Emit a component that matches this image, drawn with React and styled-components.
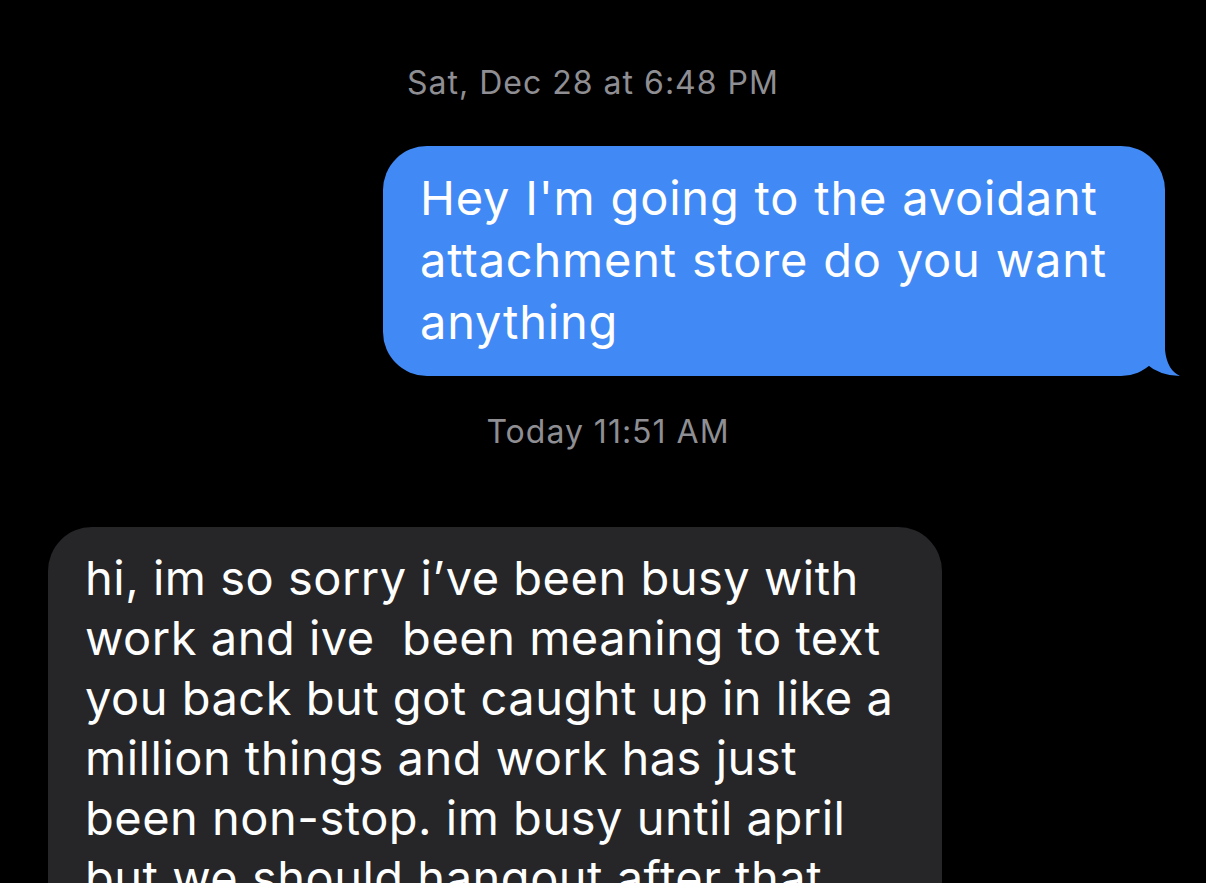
import React from 'react'
import styled, { createGlobalStyle } from 'styled-components'

const GlobalStyle = createGlobalStyle`
  html, body {
    margin: 0;
    padding: 0;
    background: #000;
  }
  body {
    font-family: Inter, "Liberation Sans", sans-serif;
    -webkit-font-smoothing: antialiased;
    overflow: hidden;
  }
`

const Thread = styled.div`
  width: 1206px;
  height: 883px;
  overflow: hidden;
  background: #000;
  display: flex;
  flex-direction: column;
  padding-top: 63px;
  box-sizing: border-box;
`

const Stamp = styled.div`
  color: #8e8e93;
  font-size: 32px;
  line-height: 40px;
  letter-spacing: 1px;
  text-align: center;
  margin: ${p => p.$margin};
  transform: translateX(${p => p.$shift || 0}px);
`

const Row = styled.div`
  display: flex;
  justify-content: ${p => (p.$out ? 'flex-end' : 'flex-start')};
  padding: ${p => (p.$out ? '0 41px 0 0' : '0 0 0 48px')};
`

const Bubble = styled.div`
  position: relative;
  box-sizing: border-box;
  width: ${p => p.$width}px;
  padding: ${p => p.$pad};
  border-radius: 44px;
  background: ${p => (p.$out ? '#418af5' : '#262629')};
  color: #fff;
  font-size: ${p => p.$size}px;
  line-height: ${p => p.$lh}px;
  letter-spacing: ${p => p.$ls}px;
  word-spacing: ${p => p.$ws || 0}px;
`

const Line = styled.span`
  display: block;
  white-space: pre;
`

const Tail = styled.svg`
  position: absolute;
  right: -15px;
  bottom: 0;
  width: 70px;
  height: 56px;
`

const outgoing = [
  'Hey I\'m going to the avoidant',
  'attachment store do you want',
  'anything',
]

const incoming = [
  'hi, im so sorry i’ve been busy with',
  'work and ive  been meaning to text',
  'you back but got caught up in like a',
  'million things and work has just',
  'been non-stop. im busy until april',
  'but we should hangout after that',
]

export default function App() {
  return (
    <>
      <GlobalStyle />
      <Thread>
        <Stamp $margin="0 0 43px 0" $shift={-10}>
          Sat, Dec 28 at 6:48 PM
        </Stamp>
        <Row $out>
          <Bubble $out $width={782} $size={47} $lh={62} $ls={0.8} $ws={1} $pad="21px 40px 23px 37px">
            {outgoing.map(t => (
              <Line key={t}>{t}</Line>
            ))}
            <Tail viewBox="0 0 70 56">
              <path d="M0 0 H55 V30 Q57 50 70 56 Q50 56 35 43 Q22 56 0 56 Z" fill="#418af5" />
            </Tail>
          </Bubble>
        </Row>
        <Stamp $margin="36px 0 75px 0" $shift={5}>
          Today 11:51 AM
        </Stamp>
        <Row>
          <Bubble $width={894} $size={47} $lh={60} $ls={0.5} $pad="21px 40px 30px 37px">
            {incoming.map(t => (
              <Line key={t}>{t}</Line>
            ))}
          </Bubble>
        </Row>
      </Thread>
    </>
  )
}
